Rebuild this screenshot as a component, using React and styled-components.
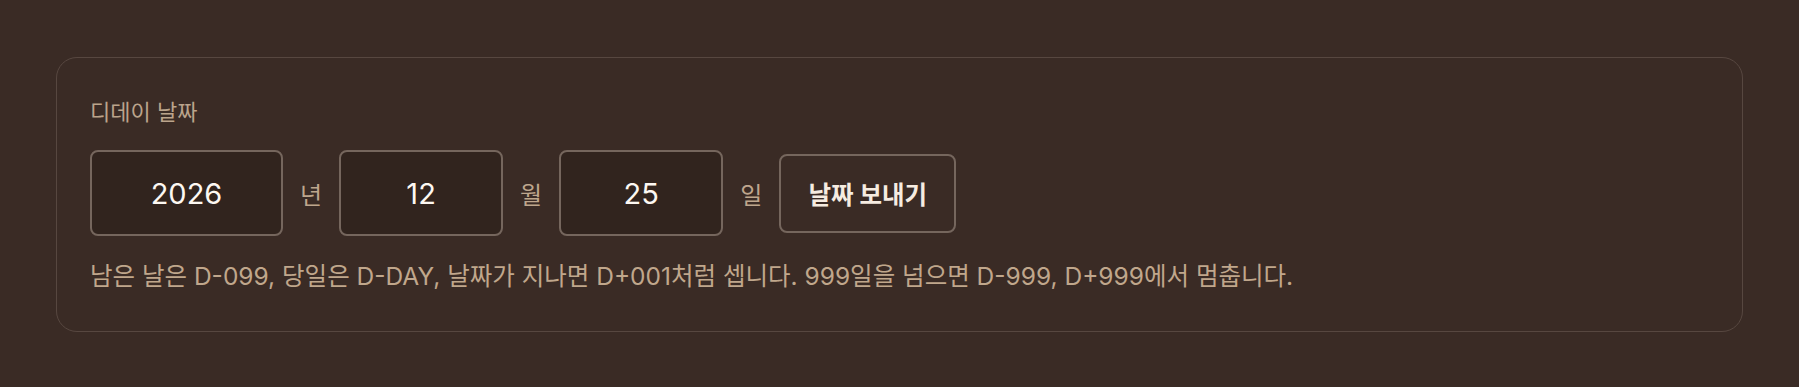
import React, { useState } from 'react'
import styled, { createGlobalStyle } from 'styled-components'

const Global = createGlobalStyle`
  html, body {
    margin: 0;
    padding: 0;
    background: #3a2b25;
  }
  body {
    font-family: Inter, "Noto Sans CJK KR", "Noto Sans", sans-serif;
  }
`

const Page = styled.div`
  padding: 57px 56px;
`

const Card = styled.section`
  border: 1px solid #574740;
  border-radius: 21px;
  padding: 40px 33px 39px;
  display: flex;
  flex-direction: column;
  gap: 24px;
`

const Label = styled.div`
  font-size: 22px;
  line-height: 28px;
  color: #bba48c;
`

const Row = styled.div`
  display: flex;
  align-items: center;
  gap: 17px;
`

const Field = styled.input`
  box-sizing: border-box;
  width: ${p => p.$w}px;
  height: 86px;
  border: 2px solid #75665d;
  border-radius: 8px;
  background: #31241e;
  color: #fdf8f2;
  font-family: Inter, "Noto Sans CJK KR", sans-serif;
  font-size: 29px;
  text-align: center;
  outline: none;
  padding: 0;
`

const Unit = styled.span`
  font-size: 24px;
  color: #bea68d;
`

const Button = styled.button`
  box-sizing: border-box;
  width: 177px;
  height: 79px;
  padding: 0;
  border: 2px solid #75665d;
  border-radius: 8px;
  background: transparent;
  color: #f6ece1;
  font-family: Inter, "Noto Sans CJK KR", sans-serif;
  font-size: 24.5px;
  font-weight: 700;
  cursor: pointer;
`

const Hint = styled.p`
  margin: 0;
  font-size: 24.5px;
  line-height: 32px;
  color: #c0a78c;
`

export default function App() {
  const [y, setY] = useState('2026')
  const [m, setM] = useState('12')
  const [d, setD] = useState('25')
  return (
    <Page>
      <Global />
      <Card>
        <Label>디데이 날짜</Label>
        <Row>
          <Field $w={193} value={y} onChange={e => setY(e.target.value)} />
          <Unit>년</Unit>
          <Field $w={164} value={m} onChange={e => setM(e.target.value)} />
          <Unit>월</Unit>
          <Field $w={164} value={d} onChange={e => setD(e.target.value)} />
          <Unit>일</Unit>
          <Button>날짜 보내기</Button>
        </Row>
        <Hint>
          남은 날은 D-099, 당일은 D-DAY, 날짜가 지나면 D+001처럼 셉니다. 999일을 넘으면 D-999, D+999에서 멈춥니다.
        </Hint>
      </Card>
    </Page>
  )
}
